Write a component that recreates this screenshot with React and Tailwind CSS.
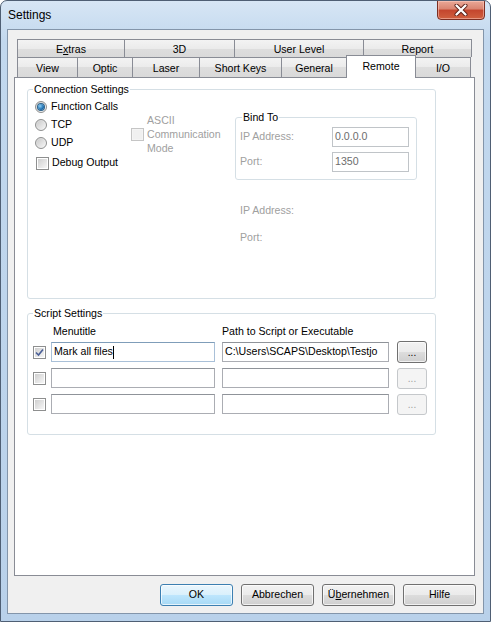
import React from "react";

const tabsTop = [
    { label: "Extras", w: "w-[107px]", mn: 1 },
    { label: "3D", w: "w-[110px]" },
    { label: "User Level", w: "w-[129px]" },
    { label: "Report", w: "w-[109px]", last: true },
];

const tabsBottom = [
    { label: "View", w: "w-[60px]" },
    { label: "Optic", w: "w-[55px]" },
    { label: "Laser", w: "w-[67px]" },
    { label: "Short Keys", w: "w-[82px]" },
    { label: "General", w: "w-[65px]" },
    { label: "Remote", w: "w-[70px]", active: true },
    { label: "I/O", w: "w-[55px]", last: true },
];

const tabBg = "bg-[linear-gradient(#f3f3f3,#ebebeb_50%,#dedede_50%,#d9d9d9)]";
const btnBg = "bg-[linear-gradient(#f2f2f2,#ebebeb_50%,#dddddd_50%,#cfcfcf)]";

function Radio({ checked }) {
    return (
        <span className="w-[12px] h-[12px] shrink-0 rounded-full border border-[#8e8f8f] bg-[linear-gradient(135deg,#d4d4d4,#f8f8f8)] flex items-center justify-center">
            {checked ? (
                <span className="w-[6px] h-[6px] rounded-full bg-[radial-gradient(circle_at_35%_35%,#8ed0f6,#1d6fb0_60%,#0d4f8a)] shadow-[0_0_0_1px_#2c628b]" />
            ) : (
                <span className="w-[8px] h-[8px] rounded-full bg-[linear-gradient(135deg,#cbcbcb,#f4f4f4)]" />
            )}
        </span>
    );
}

function Check({ checked, disabled }) {
    return (
        <span
            className={`w-[13px] h-[13px] shrink-0 border flex items-center justify-center ${
                disabled ? "border-[#c5c5c5] bg-[#f4f4f4]" : "border-[#8e8f8f] bg-white"
            }`}
        >
            <span
                className={`w-[9px] h-[9px] flex items-center justify-center ${
                    disabled ? "bg-[#f0f0f0]" : "bg-[linear-gradient(135deg,#cfcfcf,#f6f6f6)]"
                }`}
            >
                {checked && (
                    <svg width="9" height="9" viewBox="0 0 9 9">
                        <path d="M1 4.5 L3.5 7 L8 1.5" fill="none" stroke="#4a5f97" strokeWidth="1.6" />
                    </svg>
                )}
            </span>
        </span>
    );
}

function TextBox({ className = "", children, disabled }) {
    return (
        <div
            className={`h-[20px] border bg-white flex items-center px-[2px] overflow-hidden whitespace-nowrap ${
                disabled ? "border-[#c0c4c8] text-[#6d6d6d]" : "border-[#abadb3] border-t-[#8f9399]"
            } ${className}`}
        >
            {children}
        </div>
    );
}

function Group({ title, className = "", children }) {
    return (
        <fieldset className={`border border-[#d5dfe5] rounded-[3px] ${className}`}>
            <legend className="ml-[5px] px-[1px] leading-[14px]">{title}</legend>
            {children}
        </fieldset>
    );
}

function DialogButton({ children, primary }) {
    return (
        <button
            type="button"
            className={`w-[73px] h-[22px] rounded-[3px] border flex items-center justify-center shadow-[inset_0_0_0_1px_rgba(255,255,255,0.7)] ${
                primary
                    ? "border-[#3c7fb1] bg-[linear-gradient(#eaf6fd,#d9f0fc_50%,#bee6fd_50%,#a7d9f5)]"
                    : `border-[#707070] ${btnBg}`
            }`}
        >
            {children}
        </button>
    );
}

export default function App() {
    return (
        <div className="w-[491px] h-[622px] flex flex-col rounded-t-[7px] border border-[#4f5f74] bg-[linear-gradient(#d7e6f5,#c2d8ee_40px,#b9d1ea)] font-['Liberation_Sans',Arial,sans-serif] text-[10.6px] text-black overflow-hidden">
            {/* title bar */}
            <div className="h-[28px] flex justify-between shrink-0">
                <div className="pl-[7px] pt-[6px] text-[12px] leading-[16px]">Settings</div>
                <div className="mr-[5px] w-[48px] h-[20px] -mt-px rounded-b-[4px] border border-[#7c2e22] bg-[linear-gradient(#eaa897,#d98470_45%,#c4452d_50%,#d0603f)] shadow-[inset_0_0_0_1px_rgba(255,210,200,0.5)] flex items-center justify-center">
                    <svg width="14" height="12" viewBox="0 0 14 12">
                        <path d="M2.5 1.5 L11.5 10.5 M11.5 1.5 L2.5 10.5" stroke="#5a1f16" strokeWidth="4" strokeLinecap="round" />
                        <path d="M2.5 1.5 L11.5 10.5 M11.5 1.5 L2.5 10.5" stroke="#ffffff" strokeWidth="2.3" strokeLinecap="round" />
                    </svg>
                </div>
            </div>

            {/* client area */}
            <div className="flex-1 mx-[6px] mb-[7px] bg-[#f0f0f0] border border-[#8395aa] flex flex-col">
                <div className="ml-[6px] mt-[9px] w-[461px]">
                    <div className="flex pl-[3px] h-[18px]">
                        {tabsTop.map((t) => (
                            <div
                                key={t.label}
                                className={`${t.w} ${tabBg} border-l border-t border-[#898c95] ${t.last ? "border-r" : ""} flex items-center justify-center leading-[14px]`}
                            >
                                {t.mn ? (
                                    <span>
                                        E<u>x</u>tras
                                    </span>
                                ) : (
                                    t.label
                                )}
                            </div>
                        ))}
                    </div>
                    <div className="flex items-end pl-[3px] h-[20px]">
                        {tabsBottom.map((t) =>
                            t.active ? (
                                <div
                                    key={t.label}
                                    className={`${t.w} h-[23px] -mb-px relative z-10 bg-white border-l border-t border-r border-[#898c95] flex justify-center pt-[3px] leading-[14px]`}
                                >
                                    {t.label}
                                </div>
                            ) : (
                                <div
                                    key={t.label}
                                    className={`${t.w} h-[20px] ${tabBg} border-t border-[#898c95] ${t.last ? "border-r" : "border-l"} flex items-center justify-center pt-px leading-[14px]`}
                                >
                                    {t.label}
                                </div>
                            )
                        )}
                    </div>

                    {/* tab page */}
                    <div className="h-[499px] border border-[#898c95] bg-white pl-[12px] pt-[4px]">
                        <Group title="Connection Settings" className="w-[409px] h-[217px]">
                            <div className="flex pl-[7px] pt-[2px]">
                                <div className="w-[96px] flex flex-col">
                                    <div className="h-[18px] flex items-center gap-[4px]">
                                        <Radio checked />
                                        <span>Function Calls</span>
                                    </div>
                                    <div className="h-[18px] flex items-center gap-[4px]">
                                        <Radio />
                                        <span>TCP</span>
                                    </div>
                                    <div className="h-[18px] flex items-center gap-[4px]">
                                        <Radio />
                                        <span>UDP</span>
                                    </div>
                                    <div className="h-[18px] mt-[2px] ml-px flex items-center gap-[3px]">
                                        <Check />
                                        <span>Debug Output</span>
                                    </div>
                                </div>
                                <div className="w-[104px] mt-[15px] flex items-center gap-[3px] self-start">
                                    <Check disabled />
                                    <div className="leading-[14px] text-[#a0a0a0]">
                                        <div>ASCII</div>
                                        <div>Communication</div>
                                        <div>Mode</div>
                                    </div>
                                </div>
                                <div className="mt-[12px] flex flex-col">
                                    <fieldset className="w-[182px] h-[70px] border border-[#d5dfe5] rounded-[3px]">
                                        <legend className="ml-[6px] px-[1px] leading-[14px]">Bind To</legend>
                                        <div className="pt-[3px] pl-[4px] flex flex-col gap-[5px]">
                                            <div className="h-[20px] flex items-center">
                                                <span className="w-[92px] text-[#a0a0a0]">IP Address:</span>
                                                <TextBox disabled className="w-[77px]">0.0.0.0</TextBox>
                                            </div>
                                            <div className="h-[20px] flex items-center">
                                                <span className="w-[92px] text-[#a0a0a0]">Port:</span>
                                                <TextBox disabled className="w-[77px]">1350</TextBox>
                                            </div>
                                        </div>
                                    </fieldset>
                                    <div className="mt-[23px] pl-[5px] leading-[14px] text-[#a0a0a0]">IP Address:</div>
                                    <div className="mt-[13px] pl-[5px] leading-[14px] text-[#a0a0a0]">Port:</div>
                                </div>
                            </div>
                        </Group>

                        <Group title="Script Settings" className="mt-[7px] w-[409px] h-[129px]">
                            <div className="pt-[4px] pl-[5px]">
                                <div className="flex leading-[14px]">
                                    <span className="ml-[20px] w-[169px]">Menutitle</span>
                                    <span>Path to Script or Executable</span>
                                </div>
                                <div className="mt-[4px] flex flex-col gap-[6px]">
                                    {[0, 1, 2].map((i) => (
                                        <div key={i} className="h-[20px] flex items-center">
                                            <Check checked={i === 0} />
                                            <TextBox
                                                className={`ml-[5px] w-[164px] ${i === 0 ? "!border-[#a9c0d8] !border-t-[#7f9db9]" : ""}`}
                                            >
                                                {i === 0 && (
                                                    <>
                                                        <span>Mark all files</span>
                                                        <span className="w-px h-[13px] bg-black" />
                                                    </>
                                                )}
                                            </TextBox>
                                            <TextBox className="ml-[7px] w-[167px]">
                                                {i === 0 && "C:\\Users\\SCAPS\\Desktop\\Testjo"}
                                            </TextBox>
                                            {i === 0 ? (
                                                <button
                                                    type="button"
                                                    className={`ml-[8px] w-[30px] h-[22px] rounded-[3px] border border-[#707070] ${btnBg} shadow-[inset_0_0_0_1px_rgba(255,255,255,0.7)] flex items-end justify-center pb-[4px] leading-[10px] text-[10px]`}
                                                >
                                                    ...
                                                </button>
                                            ) : (
                                                <button
                                                    type="button"
                                                    className="ml-[8px] w-[30px] h-[21px] rounded-[3px] border border-[#c5c8cb] bg-[#f4f4f4] text-[#a0a0a0] flex items-end justify-center pb-[4px] leading-[10px] text-[10px]"
                                                >
                                                    ...
                                                </button>
                                            )}
                                        </div>
                                    ))}
                                </div>
                            </div>
                        </Group>
                    </div>
                </div>

                {/* dialog buttons */}
                <div className="mt-[8px] pr-[7px] flex justify-end gap-[8px]">
                    <DialogButton primary>OK</DialogButton>
                    <DialogButton>Abbrechen</DialogButton>
                    <DialogButton>
                        <span>
                            Ü<u>b</u>ernehmen
                        </span>
                    </DialogButton>
                    <DialogButton>Hilfe</DialogButton>
                </div>
            </div>
        </div>
    );
}
